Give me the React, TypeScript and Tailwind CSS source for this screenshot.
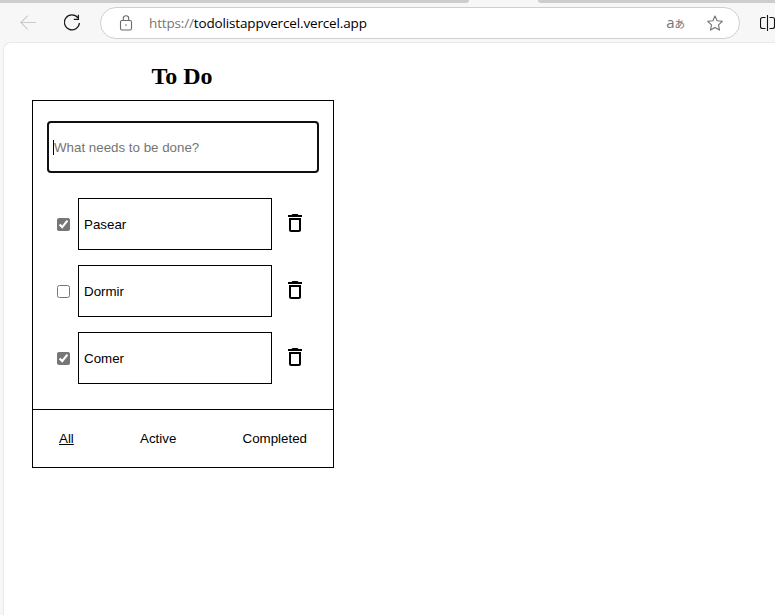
import React, { useState } from "react";

type Todo = { id: number; text: string; done: boolean };
type Filter = "All" | "Active" | "Completed";

const initialTodos: Todo[] = [
  { id: 1, text: "Pasear", done: true },
  { id: 2, text: "Dormir", done: false },
  { id: 3, text: "Comer", done: true },
];

function Toolbar() {
  return (
    <header className="h-[42px] shrink-0 bg-[#f7f7f7]">
      <div className="flex h-[3px] justify-between">
        <div className="w-[469px] rounded-br-[5px] bg-[#cdcdcd]" />
        <div className="w-[237px] rounded-bl-[5px] bg-[#cdcdcd]" />
      </div>
      <div className="flex h-[39px] items-start pt-1">
        <svg className="ml-5 mt-2 shrink-0" width="16" height="16" viewBox="0 0 16 16" fill="none" stroke="#cacaca" strokeWidth="1.1">
          <path d="M7.8 .7 .8 7.5l7 6.8M.8 7.5H16" />
        </svg>
        <svg className="ml-7 mt-[7px] shrink-0" width="17" height="18" viewBox="0 0 17 18" fill="none" stroke="#1b1b1b" strokeWidth="1.25">
          <path d="M13.9 3.8A7.5 7.5 0 1 0 15.4 9M14.4 .8v4.6H9.8" />
        </svg>
        <div className="ml-[19px] flex h-8 w-[640px] shrink-0 items-center rounded-full border border-[#d0d0d0] bg-white">
          <svg className="ml-[18px] shrink-0" width="14" height="16" viewBox="0 0 14 16" fill="none" stroke="#6b6b6b" strokeWidth="1.1">
            <rect x="1.5" y="5.5" width="11" height="9.5" rx="1.5" />
            <path d="M4.3 5.5V3.4a2.7 2.7 0 0 1 5.4 0v2.1" />
            <circle cx="7" cy="10" r=".8" fill="#6b6b6b" stroke="none" />
          </svg>
          <div className="ml-4 grow whitespace-nowrap font-['Open_Sans','Noto_Sans',sans-serif] text-[13.5px] leading-5 tracking-[-0.15px] text-black">
            <span className="text-[#767676]">https://</span>todolistappvercel.vercel.app
          </div>
          <div className="mr-[22px] flex items-baseline pb-px text-[#767676]">
            <span className="font-['Open_Sans','Noto_Sans',sans-serif] text-[15px] leading-4">a</span>
            <span className="font-['Noto_Sans_CJK_JP',sans-serif] text-[10.5px] leading-4">あ</span>
          </div>
          <svg className="mr-4 shrink-0" width="16" height="17" viewBox="0 0 16 17" fill="none" stroke="#707070" strokeWidth="1.1" strokeLinejoin="round">
            <path d="m8 1 2.1 4.7 5.2.6-3.8 3.6 1 5.2L8 12.5l-4.5 2.6 1-5.2L.7 6.3l5.2-.6z" />
          </svg>
        </div>
        <svg className="ml-5 mt-2 shrink-0" width="16" height="16" viewBox="0 0 16 16" fill="none" stroke="#111" strokeWidth="1.1">
          <path d="M5.5 2.5h-3a2 2 0 0 0-2 2v7a2 2 0 0 0 2 2h3M9.5 2.5h3a2 2 0 0 1 2 2v7a2 2 0 0 1-2 2h-3M7.5 0v16" />
        </svg>
      </div>
    </header>
  );
}

function DeleteIcon() {
  return (
    <svg width="24" height="24" viewBox="0 0 24 24" fill="black">
      <path d="M6 19c0 1.1.9 2 2 2h8c1.1 0 2-.9 2-2V7H6v12zM8 9h8v10H8V9zm7.5-5-1-1h-5l-1 1H5v2h14V4h-3.5z" />
    </svg>
  );
}

export default function App() {
  const [todos, setTodos] = useState(initialTodos);
  const [filter, setFilter] = useState<Filter>("All");
  const visible = todos.filter((t) => filter === "All" || (filter === "Completed") === t.done);
  const toggle = (id: number) => setTodos(todos.map((t) => (t.id === id ? { ...t, done: !t.done } : t)));
  const remove = (id: number) => setTodos(todos.filter((t) => t.id !== id));

  return (
    <div className="flex h-[615px] w-[775px] flex-col overflow-hidden bg-[#f7f7f7]">
      <Toolbar />
      <main className="ml-[3px] grow rounded-tl-lg border-l border-t border-[#e9e9e9] bg-white pl-7 pt-[19px] font-['Liberation_Sans',Arial,sans-serif] text-[13.333px] text-black">
        <div className="w-[302px]">
          <h1 className="h-[38px] pr-[2px] text-center font-['Liberation_Serif','Times_New_Roman',serif] text-2xl leading-7 font-bold">To Do</h1>
          <section className="border border-black">
            <div className="flex h-[308px] flex-col px-[14px] pt-5">
              <div className="flex h-[52px] items-center rounded-[4px] border-2 border-[#101010] pl-1 text-[#757575]">
                <span className="h-[15px] w-px bg-black" />
                <span className="pt-[2px]">What needs to be done?</span>
              </div>
              <ul className="mt-[25px] flex flex-col gap-[15px]">
                {visible.map((todo) => (
                  <li key={todo.id} className="flex h-[52px] items-center pl-[10px]">
                    <input type="checkbox" checked={todo.done} onChange={() => toggle(todo.id)} className="mt-px mr-2 size-[13px] accent-[#767676]" />
                    <div className="flex h-full w-[194px] items-center border border-black pt-[2px] pl-[5px]">{todo.text}</div>
                    <button className="mb-[2px] ml-[11px]" aria-label="Delete" onClick={() => remove(todo.id)}>
                      <DeleteIcon />
                    </button>
                  </li>
                ))}
              </ul>
            </div>
            <nav className="flex h-[58px] items-center justify-between border-t border-black pr-[26px] pl-[26px]">
              {(["All", "Active", "Completed"] as const).map((name) => (
                <button key={name} className={filter === name ? "underline" : ""} onClick={() => setFilter(name)}>
                  {name}
                </button>
              ))}
            </nav>
          </section>
        </div>
      </main>
    </div>
  );
}
